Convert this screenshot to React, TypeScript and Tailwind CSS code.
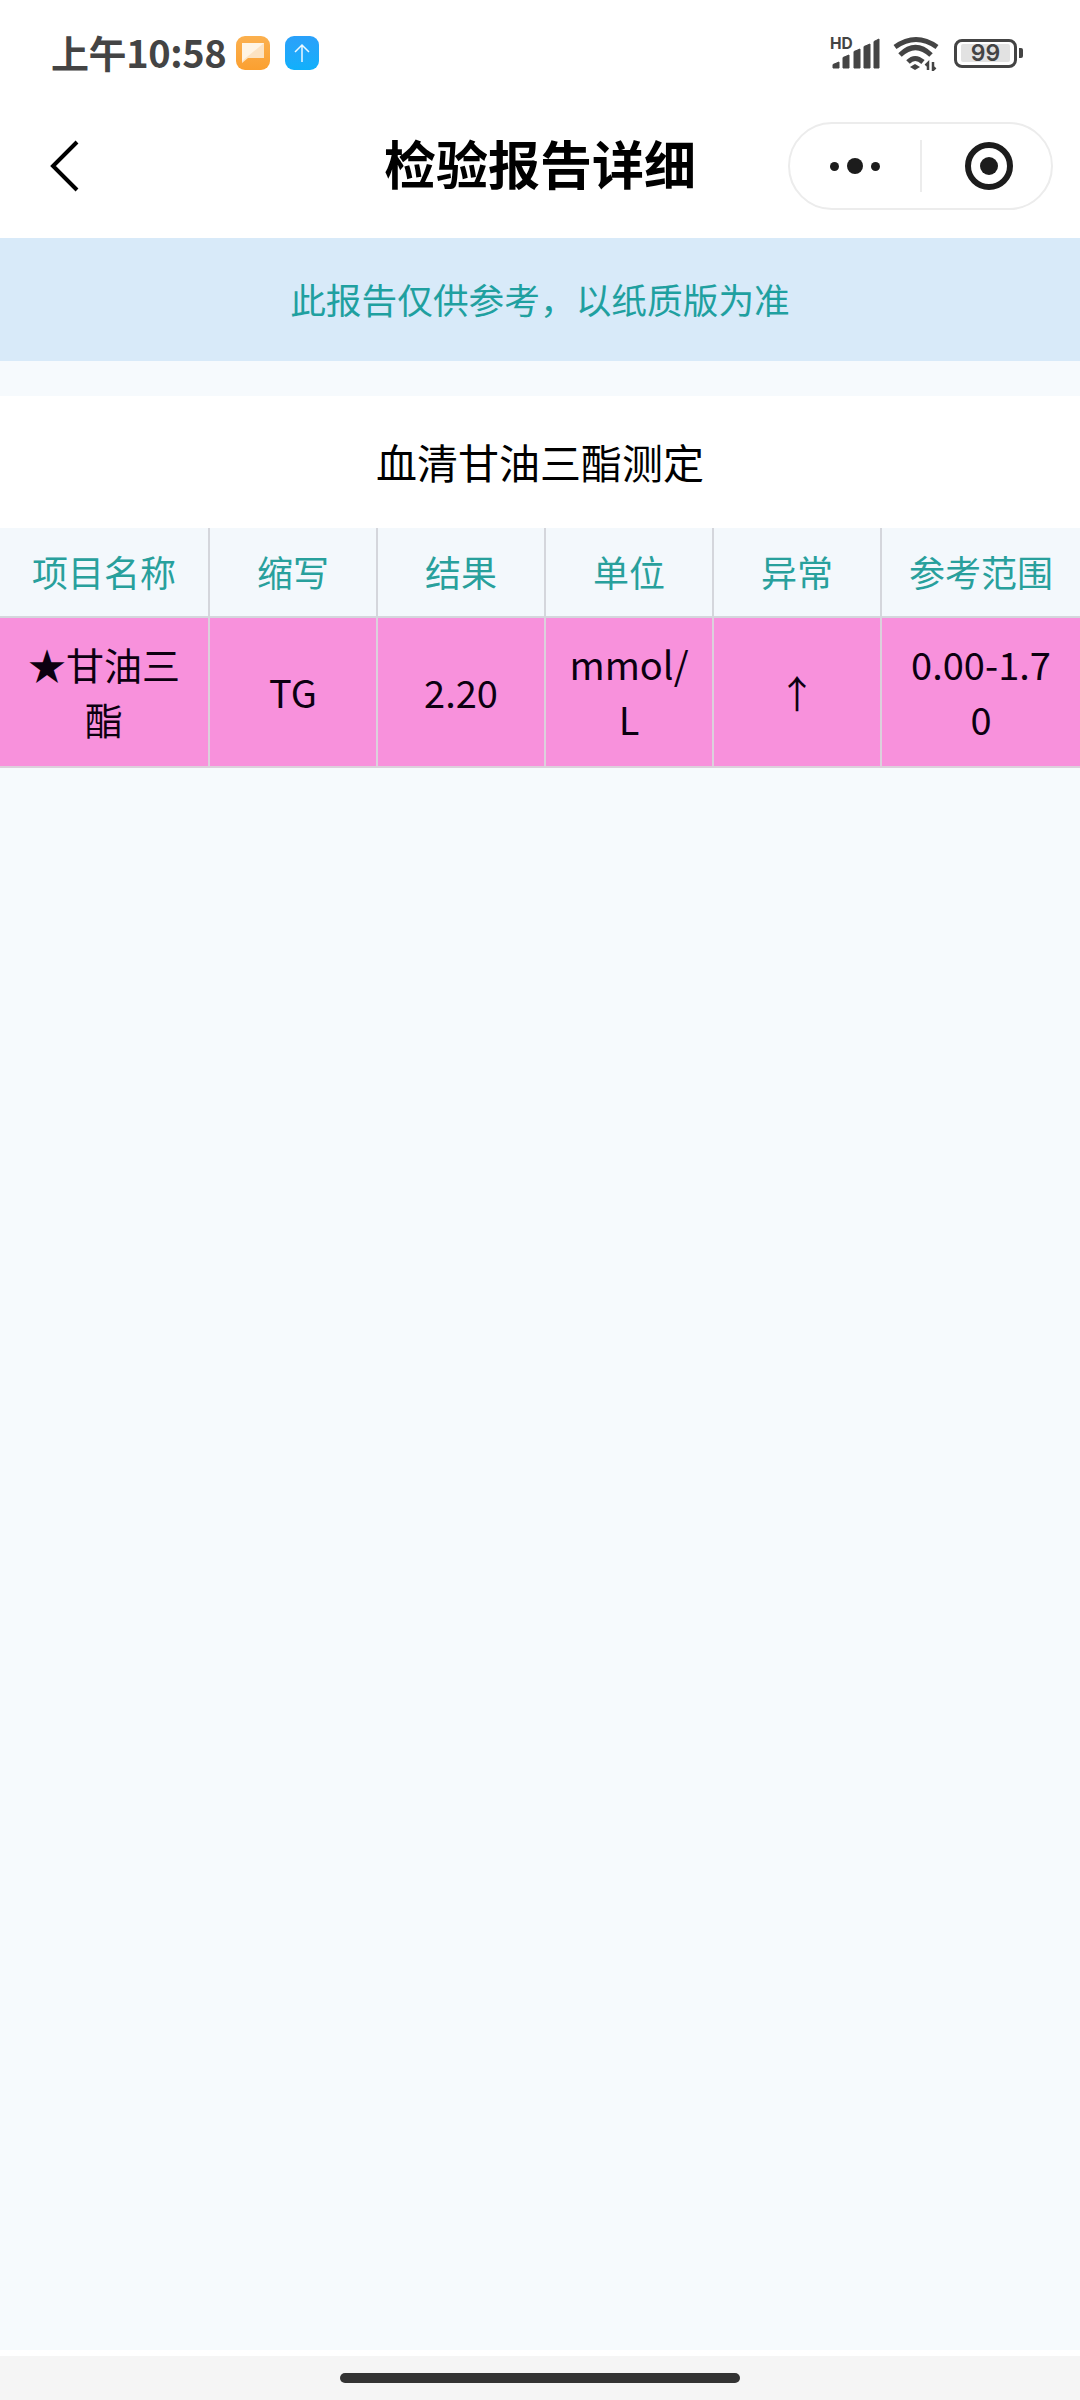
const cjk = "font-['Noto_Sans_CJK_SC','Noto_Sans',sans-serif]";

const cols = [
  { head: '项目名称', w: 'w-[210px]', cell: <>★甘油三<br />酯</> },
  { head: '缩写', w: 'w-[168px]', cell: 'TG' },
  { head: '结果', w: 'w-[168px]', cell: '2.20' },
  { head: '单位', w: 'w-[168px]', cell: <>mmol/<br />L</> },
  { head: '异常', w: 'w-[168px]', cell: '↑' },
  { head: '参考范围', w: 'flex-1', cell: <>0.00-1.7<br />0</> },
];

function StatusIcons() {
  return (
    <div className="flex items-center">
      <svg width="52" height="48" viewBox="0 -6 52 48" className="mr-[11px]">
        <text x="1" y="14" fontSize="15.500" fontWeight="700" fill="#444" fontFamily="Inter, sans-serif">HD</text>
        <path d="M4 33v-3.500l6-2.500v6zM14 33V22.500l6-2.500v13zM25 33V16.500l6-2.500v19zM35 33V11.500l6-2.500v24zM45 33V6.500l5-2.500v29z" fill="#444" stroke="#444" strokeWidth="1" strokeLinejoin="round" />
      </svg>
      <svg width="48" height="36" viewBox="0 0 48 36" className="mr-[14px]">
        <g fill="none" stroke="#444" strokeWidth="5">
          <path d="M3 12Q24 -3 45 12" />
          <path d="M8 20Q23.500 5 39 20" />
          <path d="M16 27Q23 20 31 27" />
        </g>
        <path d="M18 32l5-3 5 3-5 3z" fill="#444" />
        <path d="M36 35v-7l-2.500 2.500M41 27v8l2.500-2.500" fill="none" stroke="#444" strokeWidth="2.500" />
      </svg>
      <div className="flex h-[29px] w-[63px] items-center justify-center rounded-[8px] border-[3px] border-[#444]">
        <div className="flex h-[18px] w-[49px] items-center justify-center rounded-[2px] bg-[#e2e2e2]">
          <span className="font-['Inter',sans-serif] text-[23px] leading-none font-semibold text-[#444]">99</span>
        </div>
      </div>
      <div className="ml-[2px] h-[10px] w-[4px] rounded-r-[2px] bg-[#444]" />
    </div>
  );
}

export default function App() {
  return (
    <div className={`${cjk} flex h-[2400px] w-[1080px] flex-col bg-[#f6fafd]`}>
      <header className="flex h-[238px] flex-col bg-white">
        <div className="flex h-[108px] items-center pr-[57px] pb-[2px] pl-[51px]">
          <span className="pb-[3px] text-[38px] leading-none font-bold tracking-[-0.4px] text-[#444]">上午10:58</span>
          <div className="ml-[10px] flex h-[34px] w-[34px] items-center justify-center rounded-[9px] bg-gradient-to-b from-[#fbb04e] to-[#fba030]">
            <svg width="26" height="26" viewBox="0 0 26 26">
              <path d="M2 3h22v15L8 18l-6 5z" fill="#fce3c3" />
              <path d="M2 21L24 3H2z" fill="#fff4e4" />
            </svg>
          </div>
          <div className="ml-[15px] flex h-[34px] w-[34px] items-center justify-center rounded-[9px] bg-gradient-to-b from-[#2aa0fa] to-[#0fb0fb]">
            <svg width="18" height="20" viewBox="0 0 18 20" fill="none" stroke="#ecf8ff" strokeWidth="1.500">
              <path d="M9 19V2M2 9l7-7 7 7" />
            </svg>
          </div>
          <div className="ml-auto">
            <StatusIcons />
          </div>
        </div>
        <div className="relative flex flex-1 items-center justify-center pb-[20px]">
          <svg width="30" height="52" viewBox="0 0 30 52" className="absolute top-[32px] left-[49px]" fill="none" stroke="#000" strokeWidth="4">
            <path d="M28 2L4 26l24 24" />
          </svg>
          <h1 className="text-[52px] leading-none font-bold text-black">检验报告详细</h1>
          <div className="absolute top-[14px] right-[27px] flex h-[88px] w-[265px] items-center rounded-full border-2 border-[#ececec] bg-white">
            <div className="flex w-[130px] items-center justify-center gap-[8px]">
              <span className="h-[9px] w-[9px] rounded-full bg-[#1c1c1c]" />
              <span className="h-[16px] w-[16px] rounded-full bg-[#1c1c1c]" />
              <span className="h-[9px] w-[9px] rounded-full bg-[#1c1c1c]" />
            </div>
            <div className="h-[52px] w-[2px] bg-[#ececec]" />
            <div className="flex flex-1 items-center justify-center pl-[5px]">
              <div className="flex h-[48px] w-[48px] items-center justify-center rounded-full border-[6px] border-[#1c1c1c]">
                <span className="h-[18px] w-[18px] rounded-full bg-[#1c1c1c]" />
              </div>
            </div>
          </div>
        </div>
      </header>

      <div className="flex h-[123px] items-center justify-center bg-[#d8eaf9] pb-[2px] text-[35.7px] leading-none text-[#1fa0a0]">
        此报告仅供参考，以纸质版为准
      </div>

      <div className="mt-[35px] flex h-[132px] items-center justify-center bg-white pb-[1px] text-[41px] leading-none text-black">
        血清甘油三酯测定
      </div>

      <div className="flex h-[90px] bg-[#f3f8fc]">
        {cols.map((c, i) => (
          <div
            key={c.head}
            className={`${c.w} flex items-center justify-center border-b-2 border-[#d4d6dc] pb-[2px] text-[36px] leading-none text-[#28a09c] ${i < 5 ? 'border-r-2' : ''}`}
          >
            {c.head}
          </div>
        ))}
      </div>

      <div className="flex h-[150px] bg-[#f891dc]">
        {cols.map((c, i) => (
          <div
            key={c.head}
            className={`${c.w} flex items-center justify-center border-b-2 border-[#dcd0dc] pb-[2px] text-center text-[38px] leading-[55px] text-[#0c0010] ${i < 5 ? 'border-r-2' : ''}`}
          >
            <span>{c.cell}</span>
          </div>
        ))}
      </div>

      <div className="flex-1" />
      <div className="h-[6px] bg-white" />
      <div className="flex h-[44px] justify-center bg-[#f5f5f5] pt-[17px]">
        <div className="h-[10px] w-[400px] rounded-full bg-[#333]" />
      </div>
    </div>
  );
}
